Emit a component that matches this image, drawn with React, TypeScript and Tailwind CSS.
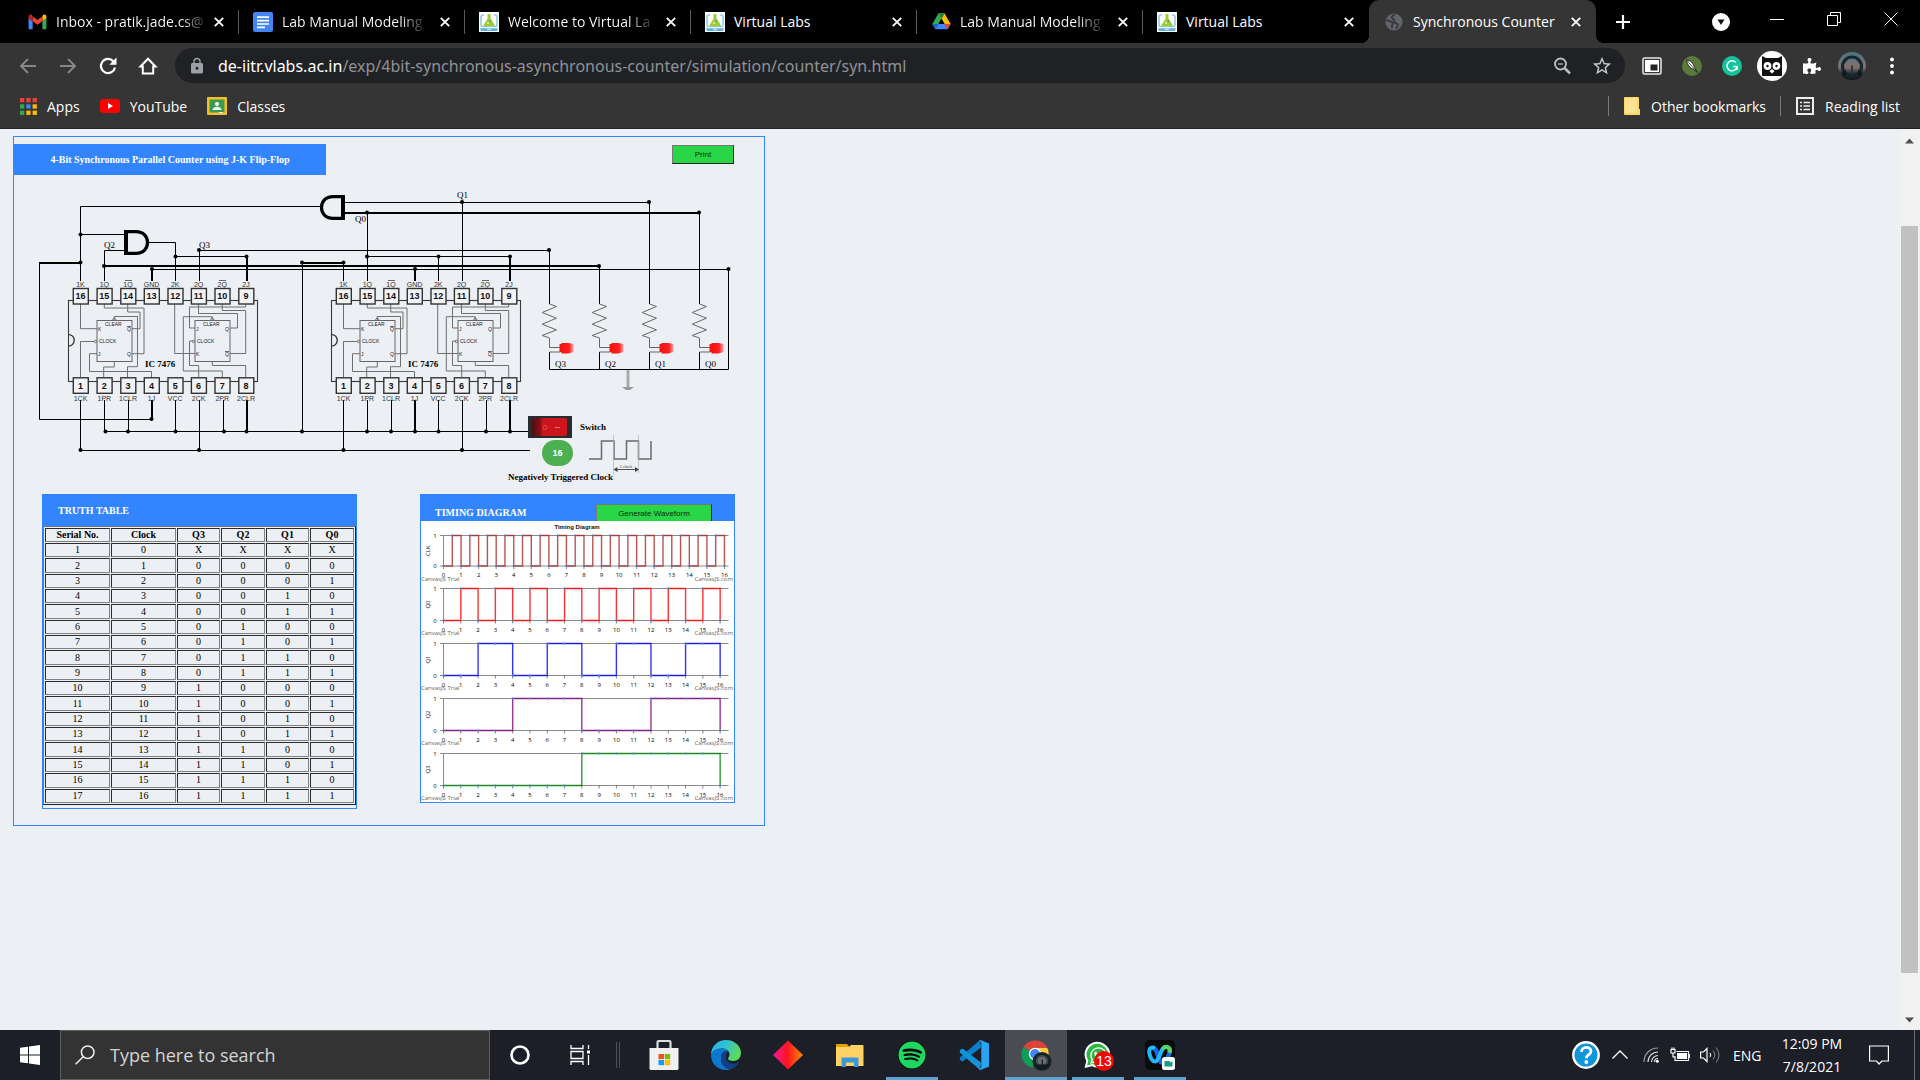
import React from "react";
import { FaPuzzlePiece, FaSpotify, FaWhatsapp } from "react-icons/fa";
import { MdLock, MdStarBorder } from "react-icons/md";

/* ---------- Browser icons ---------- */

function GmailIcon() {
  return (
    <svg viewBox="0 0 20 16" className="h-4 w-[19px]">
      <path d="M.6 4v10.200c0 .8.6 1.400 1.400 1.400h2.900V7.200z" fill="#4285f4" />
      <path d="M15.100 15.600H18c.8 0 1.400-.6 1.400-1.400V4l-4.300 3.200z" fill="#34a853" />
      <path d="M15.100 2.100v5.100L19.400 4V2.500c0-2-2.200-3-3.600-1.900z" fill="#fbbc04" />
      <path d="M4.900 7.200V2.100L10 6l5.100-3.900v5.100L10 11z" fill="#ea4335" />
      <path d="M.6 2.500V4l4.300 3.200V2.100L4.200.6C2.800-.5.600.5.600 2.500z" fill="#c5221f" />
    </svg>
  );
}

function DocsIcon() {
  return (
    <svg viewBox="0 0 20 20" className="size-5">
      <rect width="20" height="20" rx="2" fill="#4285f4" />
      <path d="M4 5.200h12M4 8.600h12M4 12h12M4 15.300h8" stroke="#fff" strokeWidth="1.700" />
    </svg>
  );
}

function VlabsIcon() {
  return (
    <svg viewBox="0 0 20 20" className="size-5">
      <rect width="20" height="20" fill="#fff" />
      <path d="M5 3H3.500C2.700 3 2 3.700 2 4.500V13c0 .8.7 1.500 1.500 1.500h13c.8 0 1.500-.7 1.500-1.500V4.500c0-.8-.7-1.500-1.500-1.500H15" fill="none" stroke="#8ecbe8" strokeWidth="1.600" />
      <path d="M8.500 2h3v4.500l4 6.300c.4.800 0 1.400-.8 1.400H5.500c-.8 0-1.200-.6-.8-1.400L8.500 7z" fill="#9acb3a" />
      <circle cx="9" cy="11" r="1" fill="#e6f5c8" />
      <circle cx="11.500" cy="9" r=".8" fill="#4c9a2a" />
      <path d="M1 16.200h18l-1 2.800H2z" fill="#5fb0dd" />
      <path d="M8 17.300h4" stroke="#fff" strokeWidth=".8" />
    </svg>
  );
}

function DriveIcon() {
  return (
    <svg viewBox="0 0 20 18" className="h-[17px] w-[19px]">
      <path d="M6.700.5h6.600L10 6.200 3.500 17.300.300 11.600z" fill="#34a853" />
      <path d="M6.700.5h6.600l6.400 11.100h-6.500z" fill="#fbbc04" />
      <path d="M3.500 17.300l3.300-5.700h12.900l-3.200 5.700z" fill="#4285f4" />
      <path d="M3.500 17.300.3 11.600h6.500z" fill="#1967d2" />
      <path d="M16.500 17.300l-3.300-5.700h6.500z" fill="#ea4335" />
      <path d="M6.700.5h6.600L10 6.200z" fill="#188038" />
      <path d="M10 6.200l3.200 5.400H6.800z" fill="#000" />
    </svg>
  );
}

function GlobeIcon() {
  return (
    <svg viewBox="0 0 20 20" className="size-[18px]">
      <circle cx="10" cy="10" r="9.500" fill="#62666c" />
      <path d="M11 1.500c-1 1.500-3 1-3.500 3-.4 1.800 2.500 2 3 3.500.3 1-.8 1.700-.2 2.500 1 1 4 .5 4 2.800 0 1.700-1.500 2.500-2 4.200M1.500 8c2 0 3 1.300 5 1.500 1.500.2 2.500 2 1.500 3.500-.6 1-.5 2.500 0 4" fill="none" stroke="#36383b" strokeWidth="2" />
    </svg>
  );
}

function CloseX({ label }: { label: string }) {
  return (
    <button aria-label={label} className="flex size-[18px] shrink-0 items-center justify-center">
      <svg viewBox="0 0 10 10" className="size-[10px]">
        <path d="M.8.8l8.400 8.400M9.200.8L.8 9.200" stroke="#fff" strokeWidth="1.800" />
      </svg>
    </button>
  );
}

const tabs = [
  { title: "Inbox - pratik.jade.cs@", icon: <GmailIcon />, fade: true },
  { title: "Lab Manual Modeling", icon: <DocsIcon />, fade: true },
  { title: "Welcome to Virtual La", icon: <VlabsIcon />, fade: true },
  { title: "Virtual Labs", icon: <VlabsIcon />, fade: false },
  { title: "Lab Manual Modeling", icon: <DriveIcon />, fade: true },
  { title: "Virtual Labs", icon: <VlabsIcon />, fade: false },
];

function TabStrip() {
  return (
    <div className="flex h-[43px] bg-black pl-[13px] text-[14px] text-white">
      {tabs.map((t, i) => (
        <div key={i} className="flex w-[226px] min-w-0 items-center pl-[14px]">
          <span className="flex w-5 shrink-0 justify-center">{t.icon}</span>
          <span className="ml-[9px] w-[148px] whitespace-nowrap">
            <span className={t.fade ? "bg-linear-to-r from-white from-85% to-[#333] bg-clip-text text-transparent" : ""}>{t.title}</span>
          </span>
          <span className="ml-[6px]">
            <CloseX label={`Close ${t.title}`} />
          </span>
          {i < 5 && <span className="ml-auto h-6 w-px bg-[#5a5a5a]" />}
        </div>
      ))}
      <div className="relative flex w-[227px] items-center rounded-t-[10px] bg-[#353535] pl-4">
        <span className="absolute bottom-0 -left-2 size-2 bg-[radial-gradient(circle_at_0_0,black_8px,#353535_8px)]" />
        <span className="absolute -right-2 bottom-0 size-2 bg-[radial-gradient(circle_at_100%_0,black_8px,#353535_8px)]" />
        <GlobeIcon />
        <span className="ml-[10px] w-[146px] whitespace-nowrap">Synchronous Counter</span>
        <span className="ml-[8px]">
          <CloseX label="Close Synchronous Counter" />
        </span>
      </div>
      <button aria-label="New tab" className="ml-[18px] flex w-[18px] items-center justify-center">
        <svg viewBox="0 0 16 16" className="size-4">
          <path d="M8 1v14M1 8h14" stroke="#fff" strokeWidth="2.200" />
        </svg>
      </button>
      <div className="ml-auto flex">
        <button aria-label="Search tabs" className="flex w-[54px] items-center justify-center">
          <svg viewBox="0 0 18 18" className="size-[18px]">
            <circle cx="9" cy="9" r="9" fill="#fff" />
            <path d="M5.500 6.500h7L9 12z" fill="#111" />
          </svg>
        </button>
        <button aria-label="Minimize" className="flex h-[37px] w-[58px] items-center justify-center">
          <svg viewBox="0 0 14 14" className="size-[14px]">
            <path d="M0 7.500h14" stroke="#fff" />
          </svg>
        </button>
        <button aria-label="Restore" className="flex h-[37px] w-[56px] items-center justify-center">
          <svg viewBox="0 0 14 14" className="size-[14px]">
            <path d="M.5 3.500h10v10H.5zM3.500 3V.500h10v10H11" fill="none" stroke="#fff" />
          </svg>
        </button>
        <button aria-label="Close window" className="flex h-[37px] w-[58px] items-center justify-center">
          <svg viewBox="0 0 14 14" className="size-[14px]">
            <path d="M.5.5l13 13M13.500.500l-13 13" stroke="#fff" />
          </svg>
        </button>
      </div>
    </div>
  );
}

function Toolbar() {
  return (
    <div className="flex h-[45px] items-start bg-[#353535] pt-[5px]">
      <div className="flex h-[35px] w-[175px] items-center">
        <button aria-label="Back" className="ml-[18px] w-5">
          <svg viewBox="0 0 20 20" className="size-5" fill="none" stroke="#85878a" strokeWidth="1.800">
            <path d="M18 10H3M10 3l-7 7 7 7" />
          </svg>
        </button>
        <button aria-label="Forward" className="ml-5 w-5">
          <svg viewBox="0 0 20 20" className="size-5" fill="none" stroke="#85878a" strokeWidth="1.800">
            <path d="M2 10h15M10 3l7 7-7 7" />
          </svg>
        </button>
        <button aria-label="Reload" className="ml-5 w-5">
          <svg viewBox="0 0 20 20" className="size-5" fill="none">
            <path d="M17 11.500A7.100 7.100 0 1 1 15.300 5.200" stroke="#fff" strokeWidth="2.200" />
            <path d="M18.500 1.500v7.200h-7.200z" fill="#fff" />
          </svg>
        </button>
        <button aria-label="Home" className="ml-5 w-5">
          <svg viewBox="0 0 20 20" className="size-5" fill="none">
            <path d="M2.500 10.500L10 2.800l7.500 7.700h-2.300v7H4.800v-7z" stroke="#fff" strokeWidth="2" />
          </svg>
        </button>
      </div>
      <div className="flex h-[35px] flex-1 items-center rounded-full bg-[#202124] pl-[13px]">
        <MdLock className="size-[18px] text-[#9aa0a6]" />
        <span className="ml-3 font-['Noto_Sans',sans-serif] text-[16px] whitespace-nowrap text-[#8f9296]">
          <span className="text-white">de-iitr.vlabs.ac.in</span>/exp/4bit-synchronous-asynchronous-counter/simulation/counter/syn.html
        </span>
        <button aria-label="Zoom" className="ml-auto">
          <svg viewBox="0 0 18 18" className="size-[18px]" fill="none" stroke="#b9bbbe" strokeWidth="1.900">
            <circle cx="7.500" cy="7" r="5.500" />
            <path d="M11.500 11l5.500 5.500" strokeWidth="2.500" />
            <path d="M5 7h5" strokeWidth="1.300" />
          </svg>
        </button>
        <button aria-label="Bookmark this page" className="mr-[12px] ml-5">
          <MdStarBorder className="size-[22px] text-[#c6c8ca]" />
        </button>
      </div>
      <div className="flex h-[35px] w-[295px] items-center">
        <button aria-label="Picture in picture" className="ml-[17px]">
          <svg viewBox="0 0 20 18" className="h-[18px] w-5">
            <rect x="1" y="1" width="18" height="16" rx="1.500" fill="none" stroke="#e8e8e8" strokeWidth="1.500" />
            <rect x="3" y="3" width="14" height="12" fill="#fff" />
            <rect x="8.500" y="7.500" width="7" height="6" fill="#222" />
          </svg>
        </button>
        <button aria-label="Feather extension" className="ml-5">
          <svg viewBox="0 0 20 20" className="size-5">
            <circle cx="10" cy="10" r="10" fill="#587a3a" />
            <path d="M4.500 4c4 0 7 3.500 8 7.500l3 5-3.500-3C8.500 12.500 5 9 4.500 4z" fill="#f4f4f4" stroke="#1c1c1c" strokeWidth=".9" />
            <path d="M5 4.500L14 15" stroke="#333" strokeWidth=".8" />
          </svg>
        </button>
        <button aria-label="Grammarly" className="ml-5">
          <svg viewBox="0 0 20 20" className="size-5">
            <circle cx="10" cy="10" r="10" fill="#15c39a" />
            <path d="M13.800 6.500A5 5 0 1 0 15 10.500h-4M15 10.500v3.500" fill="none" stroke="#fff" strokeWidth="1.500" />
          </svg>
        </button>
        <button aria-label="Owl extension" className="ml-[15px]">
          <svg viewBox="0 0 30 30" className="size-[30px]">
            <circle cx="15" cy="15" r="15" fill="#fff" />
            <path d="M5 5l4 2h12l4-2v20H5z" fill="#111" />
            <circle cx="10.500" cy="15" r="3.900" fill="#fff" />
            <circle cx="19.500" cy="15" r="3.900" fill="#fff" />
            <circle cx="10.500" cy="15" r="1.200" fill="#111" />
            <circle cx="19.500" cy="15" r="1.200" fill="#111" />
            <path d="M15 18l2.500 2.300L15 22.500l-2.500-2.200z" fill="#fff" />
          </svg>
        </button>
        <button aria-label="Extensions" className="ml-[16px]">
          <FaPuzzlePiece className="size-[18px] text-white" />
        </button>
        <button aria-label="Profile" className="ml-[17px]">
          <svg viewBox="0 0 28 28" className="size-7">
            <defs>
              <linearGradient id="sky" x1="0" y1="0" x2="0" y2="1">
                <stop offset="0" stopColor="#4c7486" />
                <stop offset=".55" stopColor="#86706c" />
                <stop offset=".75" stopColor="#2a3236" />
                <stop offset="1" stopColor="#0d1517" />
              </linearGradient>
            </defs>
            <circle cx="14" cy="14" r="14" fill="url(#sky)" />
            <circle cx="14" cy="14.500" r="9.500" fill="none" stroke="#132930" strokeWidth="3.200" />
            <path d="M4 20l4-2v8l-3-2zM24 20l-4-2v8l3-2z" fill="#0d1a1e" />
            <path d="M13 13.500h2v7h-2z" fill="#2b353b" />
          </svg>
        </button>
        <button aria-label="Menu" className="ml-[24px]">
          <svg viewBox="0 0 4 18" className="h-[18px] w-1" fill="#fff">
            <circle cx="2" cy="2.500" r="1.900" />
            <circle cx="2" cy="9" r="1.900" />
            <circle cx="2" cy="15.500" r="1.900" />
          </svg>
        </button>
      </div>
    </div>
  );
}

const appDots = ["#ea4335", "#ea4335", "#ea4335", "#34a853", "#4285f4", "#fbbc04", "#34a853", "#fbbc04", "#fbbc04"];

function BookmarksBar() {
  return (
    <div className="flex h-[41px] items-start border-b border-[#222] bg-[#353535] pl-5 text-[14px] text-white">
      <div className="flex h-9 w-full items-center">
        <a href="#apps" className="flex items-center">
          <svg viewBox="0 0 17 17" className="size-[17px]">
            {appDots.map((c, i) => (
              <rect key={i} x={(i % 3) * 6.300} y={Math.floor(i / 3) * 6.300} width="4.300" height="4.300" fill={c} />
            ))}
          </svg>
          <span className="ml-[10px]">Apps</span>
        </a>
        <a href="#youtube" className="ml-5 flex items-center">
          <svg viewBox="0 0 20 14" className="h-[14px] w-5">
            <rect width="20" height="14" rx="3.500" fill="#f00" />
            <path d="M8 4l5 3-5 3z" fill="#fff" />
          </svg>
          <span className="ml-[10px]">YouTube</span>
        </a>
        <a href="#classes" className="ml-5 flex items-center">
          <svg viewBox="0 0 20 18" className="h-[18px] w-5">
            <rect width="20" height="18" rx="1" fill="#f6bf26" />
            <rect x="2.500" y="2.500" width="15" height="13" fill="#3c9a50" />
            <circle cx="10" cy="7" r="2" fill="#fff" />
            <path d="M5.500 13c0-2.500 2.500-3.300 4.500-3.300s4.500.8 4.500 3.300z" fill="#e6f4ea" />
            <path d="M12 15.500h4" stroke="#fff" />
          </svg>
          <span className="ml-[10px]">Classes</span>
        </a>
        <span className="ml-auto h-5 w-px shrink-0 bg-[#7a7a7a]" />
        <a href="#other" className="ml-[15px] flex items-center">
          <svg viewBox="0 0 16 18" className="h-[18px] w-4">
            <path d="M1 0h13a1 1 0 0 1 1 1v11h1v6H1a1 1 0 0 1-1-1V1a1 1 0 0 1 1-1z" fill="#fdd663" />
            <path d="M1 1h12v15H1z" fill="#fde293" />
          </svg>
          <span className="ml-[11px] w-[117px] whitespace-nowrap">Other bookmarks</span>
        </a>
        <span className="ml-3 h-5 w-px shrink-0 bg-[#7a7a7a]" />
        <button className="mr-4 ml-[15px] flex items-center">
          <svg viewBox="0 0 18 18" className="size-[18px]" fill="none" stroke="#eee">
            <rect x="1" y="1" width="16" height="16" strokeWidth="2" />
            <path d="M4 5.500h2M4 9h2M4 12.500h2M7.500 5.500H14M7.500 9H14M7.500 12.500H14" strokeWidth="1.700" />
          </svg>
          <span className="ml-[11px] w-[79px] text-left whitespace-nowrap">Reading list</span>
        </button>
      </div>
    </div>
  );
}

/* ---------- Circuit ---------- */

const pinX = [80.5, 104.3, 128, 151.5, 175.2, 198.6, 222.2, 246];
const topPins: [string, string][] = [
  ["16", "1K"], ["15", "1Q"], ["14", "1Q"], ["13", "GND"], ["12", "2K"], ["11", "2Q"], ["10", "2Q"], ["9", "2J"],
];
const bottomPins: [string, string][] = [
  ["1", "1CK"], ["2", "1PR"], ["3", "1CLR"], ["4", "1J"], ["5", "VCC"], ["6", "2CK"], ["7", "2PR"], ["8", "2CLR"],
];
const chipWires = [
  "M80.500 304V328.700H97", "M104.300 304V308H144V353.700H132", "M127.700 304V312H140V328.700H132",
  "M114.300 320V316.500H137.500V366.700H127.500V378", "M80.500 378V341.500H94", "M97 353.700H89.500V371.500H151.500V378",
  "M114.300 361.700V367H103.700V378", "M174.700 304V353.500H195", "M198.500 304V313.500H237.500V328H230",
  "M222.300 304V310.500H245.700V353.500H230", "M245.700 304V307H189.500V328H195",
  "M212.300 320V316.700H183.300V371H222.300V378", "M193 341H189.500V365.500H198.700V378", "M212.300 362V365.500H245.700V378",
];

function Chip({ dx }: { dx: number }) {
  return (
    <g transform={`translate(${dx} 0)`} fontFamily="Liberation Sans">
      <rect x="68.500" y="300.500" width="189" height="81" fill="none" stroke="#3a3a3a" strokeWidth="1.100" />
      <path d="M68.500 334.500a5.500 5.500 0 0 1 0 11.500" fill="none" stroke="#222" strokeWidth="1.200" />
      <g fill="none" stroke="#6f6f6f" strokeWidth="1">
        {chipWires.map((d) => (
          <path key={d} d={d} />
        ))}
        <rect x="97" y="320.500" width="35" height="41" stroke="#666" />
        <rect x="195" y="320.500" width="35" height="41" stroke="#666" />
        <circle cx="95.500" cy="341.500" r="1.200" />
        <circle cx="193.500" cy="341.500" r="1.200" />
        <path d="M112 320.500l2.300-3 2.300 3M210 320.500l2.300-3 2.300 3" />
      </g>
      <g fontSize="5" fill="#222">
        <text x="105" y="326">CLEAR</text>
        <text x="99" y="343">CLOCK</text>
        <text x="98" y="331">K</text>
        <text x="127" y="331">Q</text>
        <text x="98" y="356">J</text>
        <text x="127" y="356">Q</text>
        <text x="203" y="326">CLEAR</text>
        <text x="197" y="343">CLOCK</text>
        <text x="196" y="331">J</text>
        <text x="225" y="331">Q</text>
        <text x="196" y="356">K</text>
        <text x="225" y="356">Q</text>
      </g>
      <path d="M127 326.500h4M225 351.500h4M125 280.500h7M219 280.500h7" stroke="#444" strokeWidth=".8" />
      {pinX.map((x, i) => (
        <g key={x} textAnchor="middle">
          <rect x={x - 7.2} y="288.500" width="15" height="15.500" fill="#f1f3f6" stroke="#333" strokeWidth="1.400" />
          <rect x={x - 7.2} y="377.800" width="15" height="15.500" fill="#f1f3f6" stroke="#333" strokeWidth="1.400" />
          <text x={x} y="299" fontSize="9" fontWeight="bold" fill="#111">{topPins[i][0]}</text>
          <text x={x} y="389" fontSize="9" fontWeight="bold" fill="#111">{bottomPins[i][0]}</text>
          <text x={x} y="287" fontSize="7" fill="#333">{topPins[i][1]}</text>
          <text x={x} y="401" fontSize="7" fill="#333">{bottomPins[i][1]}</text>
        </g>
      ))}
    </g>
  );
}

const thinWires = [
  "M320 206.500H80.500V281", "M80.500 234.500H124", "M124 250.500H104.500V281", "M149 242.500H175.500V281",
  "M175.500 256.500H247", "M199.500 281V250.500H549.500V304", "M39.500 263V419.500H152", "M599.500 266V304",
  "M152 269.500H728.500V369.500H549.500V352", "M302.500 263V431.500", "M343.500 263V281", "M105 431.500H528",
  "M80.500 400V450.500H530", "M104.500 400V431", "M128.500 400V431", "M175.500 400V431", "M199.500 400V450",
  "M223.500 400V431", "M343.500 400V450", "M367.500 400V431", "M391.500 400V431", "M438.500 400V431",
  "M462.500 400V450", "M486.500 400V431", "M367.500 213V281", "M367.500 256.500H510", "M438.500 256V281",
  "M462.500 202V281", "M345 202.500H649.500V304", "M699.500 213V304", "M599.500 352V369", "M649.500 352V369", "M699.500 352V369",
];
const thickWires = [
  "M247 256V281", "M39 263H81", "M152 400V420", "M104 266H600", "M152 269V281", "M302 263H344", "M247 400V431",
  "M415 400V431", "M510 400V431", "M510 256V281", "M415 269V281", "M345 213H700",
];
const joints: [number, number][] = [
  [80.5, 234.5], [80.5, 262.5], [175.5, 256.5], [246.5, 256.5], [199, 250], [549, 250], [151.5, 419], [104, 266],
  [599, 266], [152, 269], [728.5, 269], [302, 262.5], [343.5, 262.5], [105.5, 431.5], [128, 431.5], [175.5, 431.5],
  [224, 431.5], [246.5, 431.5], [302, 431.5], [367, 431.5], [391, 431.5], [415, 431.5], [438.5, 431.5], [486, 431.5],
  [510, 431.5], [80.5, 450], [199, 450], [343.5, 450], [462, 450], [367, 212.5], [367, 256.5], [438.5, 256.5],
  [510, 256.5], [415, 269], [462, 202], [649, 202], [699, 212.5],
];
const leds: [number, string][] = [[549.5, "Q3"], [599.5, "Q2"], [649.5, "Q1"], [699.5, "Q0"]];

function Circuit() {
  return (
    <div className="relative">
      <svg viewBox="14 175 750 319" width="750" height="319" role="img" aria-label="Counter circuit" className="block">
        <defs>
          <filter id="soft" x="-20%" y="-20%" width="140%" height="140%">
            <feGaussianBlur stdDeviation=".6" />
          </filter>
          <linearGradient id="led" x1="0" x2="1">
            <stop offset="0" stopColor="#ee1111" />
            <stop offset=".7" stopColor="#ff2222" />
            <stop offset="1" stopColor="#ff6a6a" stopOpacity=".6" />
          </linearGradient>
        </defs>
        <g fill="none" stroke="#000">
          {thinWires.map((d) => (
            <path key={d} d={d} />
          ))}
          {thickWires.map((d) => (
            <path key={d} d={d} strokeWidth="2" />
          ))}
        </g>
        {joints.map(([x, y]) => (
          <circle key={`${x}-${y}`} cx={x} cy={y} r="2" />
        ))}
        <Chip dx={0} />
        <Chip dx={263} />
        <g fill="#eceff4" stroke="#000" strokeWidth="3.200">
          <path d="M126 231.600h10c7.500 0 11.500 5 11.500 10.900s-4 10.900-11.500 10.900h-10z" />
          <path d="M343 196.600h-10c-7.500 0-11.500 5-11.500 10.900s4 10.900 11.500 10.900h10z" />
          <path d="M126 230v25M343 195v25" strokeWidth="4" />
        </g>
        {leds.map(([x, name]) => (
          <g key={name}>
            <path
              d={`M${x} 304l7 2.500-14.300 6 14.300 5.700-14.300 6 14.300 5.700-14.300 5.600 7.300 2.500v9.500h11M${x} 352h11`}
              fill="none"
              stroke="#666"
            />
            <path d={`M${x + 10} 344h2v-1h7l5 1v8l-5 1.500h-7v-1.500h-2z`} fill="url(#led)" filter="url(#soft)" />
            <text x={x + 5.5} y="367" fontSize="9">{name}</text>
          </g>
        ))}
        <path d="M628 370v20" stroke="#aaa" strokeWidth="3" />
        <path d="M622 387h12l-4 3h-4z" fill="#999" />
        <g fontSize="9">
          <text x="355" y="222">Q0</text>
          <text x="457" y="198">Q1</text>
          <text x="104" y="248">Q2</text>
          <text x="199" y="248">Q3</text>
          <g fontWeight="bold">
            <text x="145" y="367">IC 7476</text>
            <text x="408" y="367">IC 7476</text>
            <text x="580" y="430">Switch</text>
            <text x="508" y="480">Negatively Triggered Clock</text>
          </g>
        </g>
        <path d="M589 459h12.500v-18H614v18h12.500v-18h12v18H651v-18" fill="none" stroke="#6a6a6a" strokeWidth="1.500" />
        <path d="M613.500 435v39M638.500 435v38" stroke="#b5b5b5" strokeWidth=".7" />
        <path d="M614 469.500h24" stroke="#555" />
        <path d="M613.500 469.500l4-2.500v5zM639 469.500l-4-2.500v5z" fill="#444" />
        <text x="626" y="468" fontSize="4" textAnchor="middle" fontFamily="Liberation Sans" fill="#444">1 clock</text>
      </svg>
      <button aria-label="Switch" className="absolute top-[241px] left-[514px] h-[22px] w-[44px]">
        <svg viewBox="0 0 44 22" className="h-[22px] w-[44px]">
          <defs>
            <linearGradient id="rocker" x1="0" x2="1">
              <stop offset="0" stopColor="#4d0d10" />
              <stop offset=".25" stopColor="#8c1015" />
              <stop offset=".3" stopColor="#c8151b" />
              <stop offset="1" stopColor="#d0151b" />
            </linearGradient>
          </defs>
          <rect width="44" height="22" fill="#262d30" />
          <rect x="4" y="2" width="35" height="18" rx="2" fill="url(#rocker)" />
          <circle cx="17" cy="11.500" r="2" fill="none" stroke="#e0555a" strokeWidth=".8" />
          <path d="M27 11.500h5" stroke="#ee7d80" />
        </svg>
      </button>
      <button className="absolute top-[265px] left-[528px] h-[26px] w-[31px] rounded-[13px] bg-[#4caf50] text-center font-['Liberation_Sans',sans-serif] text-[9px] leading-[26px] font-bold text-white">
        16
      </button>
    </div>
  );
}

/* ---------- Truth table ---------- */

const headers = ["Serial No.", "Clock", "Q3", "Q2", "Q1", "Q0"];
const rows = Array.from({ length: 17 }, (_, i) =>
  i === 0 ? ["1", "0", "X", "X", "X", "X"] : [`${i + 1}`, `${i}`, ...(i - 1).toString(2).padStart(4, "0").split("")],
);

function TruthTable() {
  return (
    <section className="h-[315px] w-[315px] border border-[#3385ff]">
      <h2 className="-mx-px -mt-px flex h-8 items-center bg-[#3385ff] pl-4 text-[10px] font-bold text-white">TRUTH TABLE</h2>
      <table className="h-[279px] w-full table-fixed border-separate border-spacing-px border border-t-[#777] border-r-[#222] border-b-[#222] border-l-[#777] text-center text-[10px] leading-[12px]">
        <colgroup>
          <col className="w-[65px]" />
          <col className="w-[65px]" />
          <col className="w-[43px]" />
          <col className="w-[44px]" />
          <col className="w-[43px]" />
          <col className="w-[44px]" />
        </colgroup>
        <thead>
          <tr>
            {headers.map((h) => (
              <th key={h} className="border border-t-[#2c2c2c] border-r-[#808080] border-b-[#808080] border-l-[#2c2c2c] p-0 font-bold">
                {h}
              </th>
            ))}
          </tr>
        </thead>
        <tbody>
          {rows.map((r) => (
            <tr key={r[0]}>
              {r.map((c, j) => (
                <td key={j} className="border border-t-[#2c2c2c] border-r-[#808080] border-b-[#808080] border-l-[#2c2c2c] p-0">
                  {c}
                </td>
              ))}
            </tr>
          ))}
        </tbody>
      </table>
    </section>
  );
}

/* ---------- Timing diagram ---------- */

type Wave = { name: string; color: string; top: number; bottom: number; step: number; period: number };
const waves: Wave[] = [
  { name: "CLK", color: "#a52a2a", top: 535.5, bottom: 566, step: 17.56, period: 0.5 },
  { name: "Q0", color: "#ff0000", top: 588.5, bottom: 620.5, step: 17.29, period: 1 },
  { name: "Q1", color: "#0000ff", top: 643.5, bottom: 675.5, step: 17.29, period: 2 },
  { name: "Q2", color: "#800080", top: 698.5, bottom: 730.5, step: 17.29, period: 4 },
  { name: "Q3", color: "#008000", top: 753.5, bottom: 785.5, step: 17.29, period: 8 },
];
const x0 = 443.5;

function wavePath(w: Wave) {
  let d = `M${x0} ${w.bottom}`;
  const n = 16 / w.period;
  for (let i = 1; i <= n; i++) {
    d += `H${x0 + i * w.period * w.step}V${i % 2 === 1 ? w.top : w.bottom}`;
  }
  return d;
}

function wavePoints(w: Wave) {
  const dt = Math.min(w.period, 1);
  return Array.from({ length: 16 / dt + 1 }, (_, i) => {
    const high = Math.floor((i * dt) / w.period) % 2 === 1;
    return { x: x0 + i * dt * w.step, y: high ? w.top : w.bottom };
  });
}

function TimingDiagram() {
  return (
    <section className="h-[309px] w-[315px] border border-[#3385ff]">
      <div className="-mx-px -mt-px flex h-[27px] items-end overflow-hidden bg-[#3385ff] pl-[15px]">
        <h2 className="pb-px text-[10px] font-bold text-white">TIMING DIAGRAM</h2>
        <button className="mr-[23px] -mb-[3px] ml-auto h-5 w-[116px] self-end border border-t-[#777] border-r-[#222] border-b-[#222] border-l-[#777] bg-[#28d648] font-['Liberation_Sans',sans-serif] text-[8px] text-[#0a2a10]">
          Generate Waveform
        </button>
      </div>
      <svg viewBox="421 521 313 281" width="313" height="281" role="img" aria-label="Timing diagram" className="block bg-white" fontFamily="Open Sans">
        <text x="577" y="529" fontSize="6" fontWeight="bold" textAnchor="middle" fill="#111" fontFamily="Liberation Sans">
          Timing Diagram
        </text>
        {waves.map((w) => (
          <g key={w.name}>
            <path d={`M440 ${w.top}H728.500M440 ${w.bottom}H728.500M${x0} ${w.top}V${w.bottom}`} stroke="#8a8a8a" fill="none" />
            {Array.from({ length: 17 }, (_, i) => (
              <g key={i}>
                <path d={`M${x0 + i * w.step} ${w.bottom}v3`} stroke="#666" strokeWidth=".8" />
                <text x={x0 + i * w.step} y={w.bottom + 11} fontSize="6" textAnchor="middle" fill="#000">{i}</text>
              </g>
            ))}
            <path d={wavePath(w)} stroke={w.color} strokeOpacity=".8" strokeWidth="1.400" fill="none" />
            {wavePoints(w).map((p, i) => (
              <circle key={i} cx={p.x} cy={p.y} r="1.100" fill="#4a80c0" />
            ))}
            <text x="435" y={w.top + 2} fontSize="6" textAnchor="middle" fill="#000">1</text>
            <text x="435" y={w.bottom + 2} fontSize="6" textAnchor="middle" fill="#000">0</text>
            <text fontSize="6" textAnchor="middle" fill="#222" transform={`translate(430 ${(w.top + w.bottom) / 2}) rotate(-90)`}>
              {w.name}
            </text>
            <text x="421" y={w.bottom + 14.5} fontSize="6" fill="#666">CanvasJS Trial</text>
            <text x="733" y={w.bottom + 14.5} fontSize="6" textAnchor="end" fill="#666">CanvasJS.com</text>
          </g>
        ))}
      </svg>
    </section>
  );
}

function Simulation() {
  return (
    <div className="mt-[7px] ml-[13px] w-[752px] self-start border border-[#3385ff] pb-4 font-['Liberation_Serif','Times_New_Roman',serif] text-black">
      <div className="flex h-[38px] items-start pt-[7px]">
        <h1 className="-ml-px flex h-[31px] w-[313px] items-center justify-center bg-[#3385ff] pl-px text-[10px] font-bold text-white">
          4-Bit Synchronous Parallel Counter using J-K Flip-Flop
        </h1>
        <button className="mt-px mr-[30px] ml-auto h-[19px] w-[62px] border border-t-[#777] border-r-[#222] border-b-[#222] border-l-[#777] bg-[#28d648] font-['Liberation_Sans',sans-serif] text-[8px] text-[#0a2a10]">
          Print
        </button>
      </div>
      <Circuit />
      <div className="flex items-start gap-[63px] pl-7">
        <TruthTable />
        <TimingDiagram />
      </div>
    </div>
  );
}

/* ---------- Taskbar ---------- */

function TaskIcon({ label, underline, active, children }: { label: string; underline?: boolean; active?: boolean; children: React.ReactNode }) {
  return (
    <button aria-label={label} className={active ? "relative flex h-[50px] w-[62px] items-center justify-center bg-[#4a4c54]" : "relative flex h-[50px] w-[62px] items-center justify-center"}>
      {children}
      {active && <span className="absolute inset-x-0 bottom-0 h-[3px] bg-[#5fa3cf]" />}
      {underline && <span className="absolute inset-x-[5px] bottom-0 h-[3px] bg-[#5fa3cf]" />}
    </button>
  );
}

function Taskbar() {
  return (
    <footer className="flex h-[50px] items-center bg-[#1c1e28] text-white">
      <button aria-label="Start" className="flex w-[60px] justify-center">
        <svg viewBox="0 0 20 20" className="size-5" fill="#fff">
          <path d="M0 2.800l8-1.100v7.800H0zM9 1.500L20 0v9.500H9zM0 10.500h8v7.800l-8-1.100zM9 10.500h11V20L9 18.500z" />
        </svg>
      </button>
      <label className="flex h-[50px] w-[430px] items-center border border-[#5f5f5f] bg-[#333] pl-[14px]">
        <svg viewBox="0 0 20 20" className="size-5 shrink-0" fill="none" stroke="#eee" strokeWidth="1.500">
          <circle cx="12.700" cy="7.200" r="6.300" />
          <path d="M8.200 11.700L.6 19.300" />
        </svg>
        <input aria-label="Search" placeholder="Type here to search" className="ml-[15px] w-full bg-transparent text-[18px] placeholder:text-[#d4d4d4] focus:outline-none" />
      </label>
      <button aria-label="Cortana" className="flex w-[60px] justify-center">
        <svg viewBox="0 0 20 20" className="size-5">
          <circle cx="10" cy="10" r="8.500" fill="none" stroke="#fff" strokeWidth="2.600" />
        </svg>
      </button>
      <button aria-label="Task View" className="flex w-[60px] justify-center">
        <svg viewBox="0 0 20 20" className="size-5" fill="none" stroke="#fff" strokeWidth="1.300">
          <path d="M1 0v3.500h12V0M1 6.500h12v7H1zM1 20v-3.500h12V20M18.500 0v4M18.500 10v10" />
          <path d="M17 5.500h3v3h-3z" fill="#fff" stroke="none" />
        </svg>
      </button>
      <span className="ml-[6px] h-[26px] w-1 border-x border-[#4b4d57]" />
      <div className="ml-[13px] flex">
        <TaskIcon label="Microsoft Store">
          <svg viewBox="0 0 30 30" className="size-[30px]">
            <path d="M8.500 9V2.500a1.500 1.500 0 0 1 1.500-1.500h10a1.500 1.500 0 0 1 1.500 1.500V9" fill="none" stroke="#ddd" strokeWidth="2.200" />
            <path d="M.500 8h29v20.500a1.500 1.500 0 0 1-1.500 1.500H2a1.500 1.500 0 0 1-1.500-1.500z" fill="#f0f0f0" />
            <path d="M9.500 14H15v5.200H9.500z" fill="#f25022" />
            <path d="M15.700 14h5.500v5.200h-5.500z" fill="#7fba00" />
            <path d="M9.500 20H15v5.200H9.500z" fill="#00a4ef" />
            <path d="M15.700 20h5.500v5.200h-5.500z" fill="#ffb900" />
          </svg>
        </TaskIcon>
        <TaskIcon label="Microsoft Edge">
          <svg viewBox="0 0 30 30" className="size-[30px]">
            <defs>
              <linearGradient id="edgeTop" x1="0" x2="1" y1="0" y2=".4">
                <stop offset="0" stopColor="#31a9e8" />
                <stop offset=".5" stopColor="#2fc3d4" />
                <stop offset="1" stopColor="#5ed957" />
              </linearGradient>
            </defs>
            <path d="M0 15C0 6 7 0 15 0c9 0 15 6.500 15 13 0 5-3.500 8-8 8-3 0-5-1-5-2.500 0-1 1.500-1.500 1.500-4C18.500 11 15 8.500 11 8.500 5 8.500 1 11.500 0 15z" fill="url(#edgeTop)" />
            <path d="M0 15c1-4 5-6.500 10-6.500 4 0 6 1.200 7 2.700-4-.7-7 2.800-7 7C10 24 14 29 20 29c-1.500.7-3.500 1-5 1C6.500 30 0 23.500 0 15z" fill="#0e77cf" />
            <path d="M17 11.200c-4-.7-7 2.800-7 7C10 24.500 15 29.500 20.500 29c3-1 6-3.500 7.300-6 .2-.6-.3-.8-.8-.5-6 3-12 0-12-5.500 0-2.500 1-4 2-5.800z" fill="#123f86" />
          </svg>
        </TaskIcon>
        <TaskIcon label="Diamond app">
          <svg viewBox="0 0 30 30" className="size-[30px]">
            <defs>
              <linearGradient id="gem" x1="0" x2="1">
                <stop offset="0" stopColor="#f01c9b" />
                <stop offset=".48" stopColor="#ff1420" />
                <stop offset="1" stopColor="#ff8a00" />
              </linearGradient>
            </defs>
            <path d="M15 .500L30 15 15 29.500 0 15z" fill="url(#gem)" />
          </svg>
        </TaskIcon>
        <TaskIcon label="File Explorer">
          <svg viewBox="0 0 28 24" className="h-6 w-7">
            <path d="M0 1h11l2.500 3H0z" fill="#e3a008" />
            <path d="M0 4h13l2-2h11.500a1 1 0 0 1 1 1v20H0z" fill="#ffd263" />
            <path d="M5.500 24V14.500h17V24H18v-4.500h-8V24z" fill="#3c97dd" />
          </svg>
        </TaskIcon>
        <TaskIcon label="Spotify" underline>
          <FaSpotify className="size-7 rounded-full bg-black text-[#1ed760]" />
        </TaskIcon>
        <TaskIcon label="Visual Studio Code">
          <svg viewBox="0 0 30 30" className="size-[30px]">
            <path d="M22 7.500L3.500 21.500.800 20v-2.500L21 0z" fill="#0b7fc9" />
            <path d="M22 22.500L3.500 8.500.800 10v2.500L21 30z" fill="#1493dd" />
            <path d="M21.500 0L30 3.500v23L21.500 30c-.4 0-.9-.3-1.200-.6l2-1.900V2.500l-2-1.900c.3-.3.8-.6 1.200-.6z" fill="#2aa5f3" />
          </svg>
        </TaskIcon>
        <TaskIcon label="Google Chrome" active>
          <svg viewBox="0 0 31 31" className="size-[31px]">
            <path d="M14 14L2.500 7A13.700 13.700 0 0 1 26.500 8z" fill="#db4437" />
            <path d="M14 14L2.500 7A13.700 13.700 0 0 0 12 27.700z" fill="#0f9d58" />
            <path d="M14 8h12.300a13.700 13.700 0 0 1-12 19.700z" fill="#ffcd40" />
            <circle cx="14" cy="14" r="6.200" fill="#fff" />
            <circle cx="14" cy="14" r="4.900" fill="#4285f4" />
            <circle cx="21" cy="21.500" r="9.500" fill="#182327" />
            <circle cx="21" cy="21" r="5" fill="#6d6c70" stroke="#3d5158" strokeWidth="2" />
            <path d="M14.500 24.500h13l-2.500 4.500h-8z" fill="#121b1e" />
            <path d="M20.500 19.500h1.500v6h-1.500z" fill="#222" />
          </svg>
        </TaskIcon>
        <TaskIcon label="WhatsApp" underline>
          <span className="relative flex size-[30px] items-center justify-center">
            <svg viewBox="0 0 30 30" className="size-[30px]">
              <path d="M1.500 28l1.800-7A12.800 12.800 0 1 1 9 26.200z" fill="#fff" />
              <path d="M4 25.500l1.400-5A10.700 10.700 0 1 1 9.400 24z" fill="#2cb742" />
            </svg>
            <FaWhatsapp className="absolute size-[19px] text-white" />
            <span className="absolute top-[11px] left-[11px] flex size-5 items-center justify-center rounded-full bg-[#f00808] font-['Liberation_Sans',sans-serif] text-[14px]">13</span>
          </span>
        </TaskIcon>
        <TaskIcon label="Webex" underline>
          <svg viewBox="0 0 30 30" className="size-[30px]">
            <rect width="30" height="30" rx="5" fill="#0a0a0a" />
            <path d="M24 9c1.500 4-2 13.500-6.500 13.500-5 0-4-14-9.500-14.500" fill="none" stroke="#1b62ee" strokeWidth="4.500" strokeLinecap="round" />
            <path d="M8.500 7.500C4.500 7.500 3.500 10 4.500 14c1 4 2.500 7.500 5.500 7.500 5 0 5-14.500 11-14.500" fill="none" stroke="#22b8f4" strokeWidth="4" strokeLinecap="round" />
            <path d="M18.500 8c3-2.500 7-.5 6.500 3.500" fill="none" stroke="#58d26c" strokeWidth="4" strokeLinecap="round" />
            <rect x="17" y="17" width="13" height="13" rx="2.500" fill="#fff" />
            <path d="M19.500 21h5l1 1.500 2-1.500v5.500h-8z" fill="#1a9c80" />
          </svg>
        </TaskIcon>
      </div>
      <div className="ml-auto flex items-center">
        <svg viewBox="0 0 28 28" className="size-7">
          <circle cx="14" cy="14" r="12.700" fill="#0e95dc" stroke="#fff" strokeWidth="2.400" />
          <path d="M9.500 11c0-6 9.500-6 9.500-.8 0 3.500-4.700 3.300-4.700 7" fill="none" stroke="#fff" strokeWidth="2.800" />
          <circle cx="14.300" cy="21" r="1.900" fill="#fff" />
        </svg>
        <button aria-label="Show hidden icons" className="ml-3">
          <svg viewBox="0 0 16 16" className="size-4" fill="none" stroke="#fff" strokeWidth="1.300">
            <path d="M.5 11.500L8 4l7.500 7.500" />
          </svg>
        </button>
        <svg viewBox="0 0 16 16" className="ml-[15px] size-4" fill="none" stroke="#ddd" strokeWidth="1.200">
          <path d="M1 15C1 7 7 1 15 1" stroke="#999" />
          <path d="M5 15C5 9.500 9.500 5 15 5M8.500 15c0-3.500 3-6.500 6.500-6.500M11.500 15c0-2 1.500-3.500 3.500-3.500" />
          <circle cx="14.300" cy="14.300" r="1.500" fill="#fff" stroke="none" />
        </svg>
        <svg viewBox="0 0 20 16" className="ml-[11px] h-4 w-5" fill="none" stroke="#fff" strokeWidth="1.200">
          <path d="M5 9v4.500h13.500v-9H6.500M19.500 7v4M1 2.500h4v3.500H1zM2 2.500V.500M4 2.500V.500M3 6v4h2" />
          <path d="M7 6h10v6H7z" fill="#fff" stroke="none" />
        </svg>
        <svg viewBox="0 0 20 18" className="ml-[10px] h-[18px] w-5" fill="none" stroke="#fff" strokeWidth="1.200">
          <path d="M.6 6h2.900L7 2.500v13L3.500 12H.6zM10 7q1.500 2 0 4" />
          <path d="M13 4.500q3.500 4.500 0 9M16 1.500q6 7.500 0 15" stroke="#777" />
        </svg>
        <span className="ml-[13px] w-[30px] text-[14px]">ENG</span>
        <div className="ml-4 w-[66px] text-center text-[14px] leading-[23px] whitespace-nowrap">
          <div>12:09 PM</div>
          <div>7/8/2021</div>
        </div>
        <button aria-label="Notifications" className="ml-6">
          <svg viewBox="0 0 20 20" className="size-5" fill="none" stroke="#fff" strokeWidth="1.200">
            <path d="M.6 1h18.800v15h-6.500L10 19l-2.500-3H.6z" />
          </svg>
        </button>
        <span className="mr-[5px] ml-[25px] h-[50px] w-px bg-[#6b6d76]" />
      </div>
    </footer>
  );
}

function Scrollbar() {
  return (
    <div className="flex w-5 shrink-0 flex-col bg-[#f1f1f1]">
      <svg viewBox="0 0 20 22" className="h-[22px] w-5">
        <path d="M5 14.500h9L9.500 9.500z" fill="#505050" />
      </svg>
      <div className="ml-px flex w-[17px] flex-1 flex-col">
        <div className="grow-[75]" />
        <div className="grow-[747] bg-[#c1c1c1]" />
        <div className="grow-[35]" />
      </div>
      <svg viewBox="0 0 20 22" className="h-[22px] w-5">
        <path d="M5 9.500h9l-4.500 5z" fill="#505050" />
      </svg>
    </div>
  );
}

export default function App() {
  return (
    <div className="flex min-h-screen flex-col bg-[#eceff4] font-['Open_Sans','Noto_Sans',sans-serif]">
      <header>
        <TabStrip />
        <Toolbar />
        <BookmarksBar />
      </header>
      <main className="flex flex-1">
        <Simulation />
        <div className="flex-1" />
        <Scrollbar />
      </main>
      <Taskbar />
    </div>
  );
}
